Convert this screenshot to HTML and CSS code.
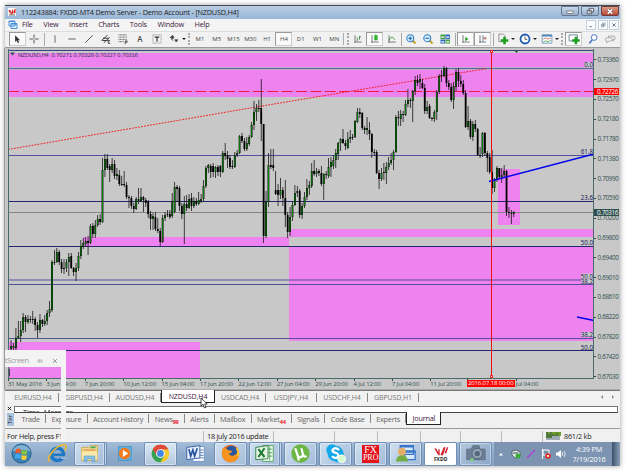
FILE: index.html
```html
<!DOCTYPE html>
<html lang="en">
<head>
    <meta charset="UTF-8">
    <title>112243884: FXDD-MT4 Demo Server</title>
    <link rel="stylesheet" href="styles.css">
</head>
<body>
    <div class="window">
        <div class="titlebar">
            <svg class="logo" viewBox="0 0 10 10"><rect width="10" height="10" fill="#fff"/><path d="M1 3l2 4V3zM4 7l2-5v5zM7 6l2-5v5z" fill="#d00" stroke="#c00" stroke-width=".6"/><path d="M1 8.7h8" stroke="#333"/></svg>
            <span class="title">112243884: FXDD-MT4 Demo Server - Demo Account - [NZDUSD,H4]</span>
            <div class="winbuttons">
                <span><svg viewBox="0 0 18 10"><rect x="5.500" y="4.500" width="7" height="2.500" fill="#fff" stroke="#555" stroke-width=".7"/></svg></span>
                <span><svg viewBox="0 0 18 10"><path d="M8 1.500h5v4H8zM6 3.500h5v4H6z" fill="#fff" stroke="#445" stroke-width=".9"/></svg></span>
                <span class="close"><svg viewBox="0 0 18 10"><path d="M6.500 2.500l5 5m0-5l-5 5" stroke="#555" stroke-width="2.600"/><path d="M6.500 2.500l5 5m0-5l-5 5" stroke="#fff" stroke-width="1.700"/></svg></span>
            </div>
        </div>

        <div class="menubar">
            <svg class="menuicon" viewBox="0 0 10 10"><path d="M1 1h6v5H1zM3 3.500h6v5H3z" fill="#dcefff" stroke="#3c86cf" stroke-width=".9"/><path d="M1 1.500h6M3 4h6" stroke="#3c86cf" stroke-width="1.200"/></svg>
            <span>File</span><span>View</span><span>Insert</span><span>Charts</span><span>Tools</span><span>Window</span><span>Help</span>
            <div class="childbuttons"><b><svg viewBox="0 0 10 10"><path d="M3 7h3" stroke="#456"/></svg></b><b><svg viewBox="0 0 10 10"><path d="M4.500 2.500h3v3h-3zM3 4.500h3v3H3z" fill="#fff" stroke="#567" stroke-width=".7"/></svg></b><b><svg viewBox="0 0 10 10"><path d="M3 3l4 4m0-4L3 7" stroke="#567" stroke-width="1.100"/></svg></b></div>
        </div>

        <div class="toolbar">
            <i class="pressed"><svg viewBox="0 0 16 16"><path d="M5.500 3v9l2-2 1.600 3.500 1.700-.8L9.300 9.500h2.900z" fill="#333"/></svg></i>
            <i><svg viewBox="0 0 16 16"><path d="M8 2v5M8 9v5M2 8h5M9 8h5" stroke="#555" stroke-width="1.300"/></svg></i>
            <i class="sep"></i>
            <i><svg viewBox="0 0 16 16"><path d="M8 3v10" stroke="#666" stroke-width="1.300"/></svg></i>
            <i><svg viewBox="0 0 16 16"><path d="M3 8h10" stroke="#666" stroke-width="1.300"/></svg></i>
            <i><svg viewBox="0 0 16 16"><path d="M3 13L13 3" stroke="#555" stroke-width="1.300"/></svg></i>
            <i><svg viewBox="0 0 16 16"><path d="M2 10l8-7M5 13l8-7M4 7h8M3 10h8" stroke="#333" stroke-width="1.200"/><path d="M11 10v4h2.500M11 12h2M11 10h2.500" fill="none" stroke="#333"/></svg></i>
            <i><svg viewBox="0 0 16 16"><path d="M2 2.500h11M2 5.500h11M2 8.500h11M2 11.500h7" stroke="#444" stroke-dasharray="1.500 .5"/><path d="M11 15v-4.500h2.500v2H11" fill="none" stroke="#333"/></svg></i>
            <i class="letter">A</i>
            <i><svg viewBox="0 0 16 16"><path d="M2.500 2.500h11v11h-11z" fill="none" stroke="#777" stroke-dasharray="1 .7"/><path d="M5 5.500h6M8 5.500v6" stroke="#333" stroke-width="1.500"/></svg></i>
            <i class="wide"><svg viewBox="0 0 16 16"><path d="M3 6l3-3 2 3-2 2zM9 9h4l-2 3zM4 8l3 2" fill="#444" stroke="#444"/></svg><em></em></i>
            <i class="handle"></i>
            <i class="tf">M1</i><i class="tf">M5</i><i class="tf">M15</i><i class="tf">M30</i><i class="tf">H1</i><i class="tf pressed">H4</i><i class="tf">D1</i><i class="tf">W1</i><i class="tf">MN</i>
            <i class="handle double"></i>
            <i><svg viewBox="0 0 16 16"><path d="M4 3v10M3 12h10" stroke="#555"/><path d="M7 6v5M10 4v5M10 5h2" stroke="#2a7a2a"/></svg></i>
            <i class="pressed"><svg viewBox="0 0 16 16"><path d="M4 3v10M3 12h10" stroke="#555"/><path d="M9 2v8" stroke="#173"/><rect x="7" y="3" width="4.500" height="6.500" fill="#2db52d"/></svg></i>
            <i><svg viewBox="0 0 16 16"><path d="M4 3v10M3 12h10" stroke="#555"/><path d="M4 10c2-6 5-5 8-1" fill="none" stroke="#2a9a2a" stroke-width="1.300"/></svg></i>
            <i class="sep thin"></i>
            <i><svg viewBox="0 0 16 16"><path d="M10 10l4 4" stroke="#c9a22a" stroke-width="2.800"/><circle cx="7" cy="7" r="4.600" fill="#d9f0ff" stroke="#2f7fc4" stroke-width="1.400"/><path d="M4.500 7h5M7 4.500v5" stroke="#1a5fa8" stroke-width="1.400"/></svg></i>
            <i><svg viewBox="0 0 16 16"><path d="M10 10l4 4" stroke="#c9a22a" stroke-width="2.800"/><circle cx="7" cy="7" r="4.600" fill="#d9f0ff" stroke="#2f7fc4" stroke-width="1.400"/><path d="M4.500 7h5" stroke="#1a5fa8" stroke-width="1.400"/></svg></i>
            <i><svg viewBox="0 0 16 16"><path d="M2 2h6v6H2zM8.500 8.500h6v5.500h-6z" fill="#3f9f3f"/><path d="M8.500 2h6v6h-6zM2 8.500h6V14H2z" fill="#2f66c0"/><path d="M3 5.500h4M9.500 5.500h4M3 11.800h4M9.500 11.800h4" stroke="#fff" stroke-width="1.700"/></svg></i>
            <i class="sep"></i>
            <i class="pressed"><svg viewBox="0 0 16 16"><path d="M4 3v10M3 12h10" stroke="#555"/><path d="M7 5l4 3-4 3z" fill="#2a9a2a"/></svg></i>
            <i class="pressed"><svg viewBox="0 0 16 16"><path d="M4 3v10M3 12h9M8 3v8" stroke="#456"/><path d="M9 7h4M11.500 5l-2 2 2 2" fill="none" stroke="#a43"/></svg></i>
            <i class="sep"></i>
            <i class="wide"><svg viewBox="0 0 16 16"><path d="M2.500 1.500h6l2 2v8h-8z" fill="#f4f4f4" stroke="#777"/><path d="M10 5v10M5 10h10" stroke="#1e9e1e" stroke-width="3.400"/></svg><em></em></i>
            <i class="wide"><svg viewBox="0 0 16 16"><circle cx="8" cy="8" r="6" fill="#fff" stroke="#1d5fae" stroke-width="2.400"/><path d="M8 4.500v4h3" fill="none" stroke="#333"/></svg><em></em></i>
            <i class="wide"><svg viewBox="0 0 16 16"><path d="M1.500 2.500h13v11h-13z" fill="#fff" stroke="#4d86b8"/><path d="M1.500 3.500h13" stroke="#4d86b8" stroke-width="2.400"/><path d="M3 8l3-1.500 3 1.500 4-1.500" fill="none" stroke="#c44"/><path d="M3 12l3-1.500 3 1 4-1.500" fill="none" stroke="#393"/></svg><em></em></i>
            <i class="handle"></i>
            <i class="pressed"><svg viewBox="0 0 16 16"><path d="M1.500 2.500h11v8h-11z" fill="#fff" stroke="#49697d"/><path d="M10.500 5v10M5.500 10h10" stroke="#1e9e1e" stroke-width="3.400"/></svg></i>
            <i class="search"><svg viewBox="0 0 16 16"><path d="M7 9l-4 5" stroke="#4a72c4" stroke-width="2"/><circle cx="9.500" cy="6" r="3.800" fill="#fff" stroke="#4a72c4" stroke-width="1.300"/></svg></i>
            <i><svg viewBox="0 0 16 16"><path d="M6 4h6q3 0 3 2.500T12 9l1 2-3-2H8Q5 9 6 4z" fill="#e6e6e6" stroke="#999"/><path d="M3 6.500h5q3 0 3 2t-3 2.500H6l-2.500 2 .5-2.300Q0 10 3 6.500z" fill="#f4f4f4" stroke="#999"/></svg></i>
        </div>

        <div class="chart">
            <div class="plotrow">
                <svg class="plot" id="plot" viewBox="8 49 586 330">
                    <g fill="#ee82ee">
                        <rect x="8" y="53" width="586" height="44"/>
                        <rect x="83" y="237" width="206" height="9"/>
                        <rect x="289" y="229" width="305" height="8"/>
                        <rect x="289" y="246" width="305" height="95"/>
                        <rect x="8" y="342" width="192" height="37"/>
                        <rect x="498" y="169" width="22" height="56"/>
                    </g>
                    <path d="M8 50.500h586" stroke="#3a3f88"/>
                    <path d="M8 68.500h586" stroke="#c2a8cd" stroke-width="3"/>
                    <path d="M8 68.500h586" stroke="#5b6c9c"/>
                    <path d="M8 155.500h586M8 280h586M8 284.500h586M8 338.500h586" stroke="#52529a" stroke-width="1.200"/>
                    <path d="M8 201.500h586M8 246.500h586M8 350.500h586" stroke="#27276f"/>
                    <path d="M8 212.500h586" stroke="#858585"/>
                    <path d="M8 91.500h586" stroke="#f01848" stroke-dasharray="11 3.400"/>
                    <path d="M8 149.500L262 106 487 68.500" stroke="#f02020" stroke-dasharray="1.800 1.200" fill="none"/>
                    <g id="candles"></g>
                    <path d="M489 181.500L594 154M577 317l17 3.500" stroke="#0000f0" stroke-width="1.300"/>
                    <path d="M491.500 52v323" stroke="#f01010"/>
                    <path d="M490.500 50.500h2v2h-2zM490.500 375.500h2v2h-2z" fill="#fff" stroke="#f01010"/>
                    <path d="M514 50h5l-2.500 3z" fill="#2f4f4f"/>
                    <path d="M10 52.500h5l-2.500 3z" fill="#2f4f4f"/>
                    <text x="18" y="56.700" class="quote" textLength="120">NZDUSD,H4&#160; 0.70271 0.70328 0.70227 0.70316</text>
                    <g class="fib" id="fib"></g>
                    <path d="M8.500 49v329.500H594M593.500 49v330" stroke="#4b6a6a" fill="none"/>
                </svg>
                <div class="prices" id="prices"></div>
            </div>
            <div class="times" id="times"></div>
        </div>

        <div class="charttabs">
            <span>EURUSD,H4</span><span>GBPUSD,H4</span><span>AUDUSD,H4</span><span class="active">NZDUSD,H4</span><span>USDCAD,H4</span><span>USDJPY,H4</span><span>USDCHF,H4</span><span>GBPUSD,H1</span>
            <div class="arrows"><u></u><u class="next"></u></div>
        </div>

        <div class="terminal">
            <div class="side"><svg viewBox="0 0 6 6"><path d="M1 1l4 4m0-4L1 5" stroke="#222" stroke-width="1.200"/></svg><div class="vert">Ter</div></div>
            <div class="termmain">
                <div class="loghead"><span>Time</span><span>Message</span></div>
                <div class="termtabs"><span>Trade</span><span>Exposure</span><span>Account History</span><span>News<sub>99</sub></span><span>Alerts</span><span>Mailbox</span><span>Market<sub>44</sub></span><span>Signals</span><span>Code Base</span><span>Experts</span><span class="active">Journal</span></div>
            </div>
        </div>

        <div class="status">
            <span class="help">For Help, press F1</span><span class="update">18 july 2016 update</span><span class="c1"></span><span class="c2"></span><span class="c3"></span><span class="c4"></span><span class="c5"></span>
            <span class="net"><svg viewBox="0 0 15 8"><path d="M0 1h15M0 3h15M0 5h6" stroke="#6f9a2c" stroke-width="2"/><path d="M1 0v8M3 2v6M5 0v8M7 2v6M9 3v5M11 1v7M13 4v4" stroke="#24455a" stroke-width=".8"/></svg>861/2 kb</span>
        </div>

        <div class="taskbar">
            <div class="app start"><svg viewBox="0 0 24 24"><circle cx="12" cy="12" r="10.500" fill="#27608f"/><circle cx="12" cy="12" r="9.500" fill="#3b83b4"/><path d="M2.500 10a10 10 0 0119 0q-9-4-19 0z" fill="#9cc6de" opacity=".7"/><path d="M6 8q3-2 5-.5V12q-2-1.500-5.500 0z" fill="#ee5a29"/><path d="M12 8q3 2 6 0l-.5 4.500q-3 1.500-5.500 0z" fill="#8cc63e"/><path d="M5.500 13q3-1.500 5.500 0v4.500q-3-1.500-6 0z" fill="#3fa9f5"/><path d="M12 13.500q3 1.500 5.500 0L17 18q-3 1.500-5 0z" fill="#ffd02e"/></svg></div>
            <div class="app ie"><svg viewBox="0 0 24 24"><circle cx="12" cy="13" r="7" fill="none" stroke="#1e78c8" stroke-width="4"/><path d="M7 13.500h11" stroke="#1e78c8" stroke-width="3"/><path d="M16 15.300h6v3h-6z" fill="#9ab5d3"/><path d="M3 21c-5-2 6-18 16-19 4 0 3 4 1 7" fill="none" stroke="#f0b928" stroke-width="1.800"/></svg></div>
            <div class="app open stack"><svg viewBox="0 0 24 24"><path d="M3 5h8l2-2h8v17H3z" fill="#f5df8d" stroke="#c9a64a"/><path d="M5 8h14" stroke="#d96a42"/><path d="M13 5h6" stroke="#43a862" stroke-width="2"/><path d="M3 10h18v9H3z" fill="#fae9ab"/><path d="M6 21v-6h12v6h-3v-3H9v3z" fill="#8cc6e8" stroke="#5aa2d2"/></svg></div>
            <div class="app"><svg viewBox="0 0 24 24"><path d="M7 4l13-2v19l-13-1z" fill="#8fc2e0"/><rect x="4" y="4" width="15" height="16" fill="#64addb" stroke="#4e94c4"/><circle cx="11" cy="12" r="6.500" fill="#f17a1c"/><path d="M9 8l6 4-6 4z" fill="#fff"/></svg></div>
            <div class="app open hot"><svg viewBox="0 0 24 24"><circle cx="12" cy="12" r="10" fill="#f7c92b"/><path d="M12 12L3.300 7A10 10 0 0120.700 7H12z" fill="#de4a3c"/><path d="M3.300 7A10 10 0 0012 22l4.300-7.500L12 12z" fill="#34a354"/><path d="M12 2A10 10 0 003.300 7l4.400 7.500L12 7h8.700A10 10 0 0012 2z" fill="#de4a3c"/><circle cx="12" cy="12" r="5" fill="#fff"/><circle cx="12" cy="12" r="3.900" fill="#4285e8"/></svg></div>
            <div class="app"><svg viewBox="0 0 24 24"><path d="M9 4h13v17H9z" fill="#fff" stroke="#6c91c4"/><path d="M15 8h6M15 11h6M15 14h6M13 17h8" stroke="#3f6dae"/><path d="M2 5l15-2v14L2 19z" fill="#e8effa" stroke="#2c5aa0"/><path d="M4.500 7l2 8 2.500-7 2 7 3-9" fill="none" stroke="#2554a0" stroke-width="1.900"/></svg></div>
            <div class="app open"><svg viewBox="0 0 24 24"><circle cx="12" cy="12" r="10" fill="#e8681c"/><circle cx="13" cy="10" r="7" fill="#29579e"/><path d="M3 6q4-1 6 2l5 1q-1 3-4 3 2 4 6 2 4-1 4-6 4 6 0 10-5 6-12 3Q0 17 3 6z" fill="#f79420"/><path d="M19 6q3 5 1 9" stroke="#fccb38" stroke-width="2" fill="none"/></svg></div>
            <div class="app open stack"><svg viewBox="0 0 24 24"><path d="M10 3h12v18H10z" fill="#f5fff5" stroke="#4c9b58"/><path d="M15 7h6M15 11h6M15 15h6M18 4v16" stroke="#4c9b58"/><path d="M2 5l14-2v15L2 19z" fill="#e5f5e4" stroke="#267a3c"/><path d="M5 7l7 9M12 6l-7 10" stroke="#1f7a36" stroke-width="2.400"/></svg></div>
            <div class="app open"><svg viewBox="0 0 24 24"><circle cx="12" cy="12" r="10.500" fill="#6db644"/><path d="M6 6l3 9q3 3 6-1l-2-8M15 13q1 4 4 2M9 15l1 5" stroke="#fff" stroke-width="2.500" fill="none"/></svg></div>
            <div class="app open"><svg viewBox="0 0 24 24"><circle cx="8" cy="8" r="6.500" fill="#14a8ea"/><circle cx="16" cy="16" r="6.500" fill="#14a8ea"/><circle cx="12" cy="12" r="9" fill="#14a8ea"/><path d="M16 8q-3-3-6-1.500-3 2 0 4l4 1.500q3 3-1 5-3 .5-5-2" stroke="#fff" stroke-width="2.600" fill="none"/><circle cx="19" cy="18" r="4.500" fill="#d9f7cd" stroke="#fff"/></svg></div>
            <div class="app open"><div class="fxpro">FX<small>PRO</small></div></div>
            <div class="app open"><svg viewBox="0 0 24 24"><path d="M6 3h15v10H6zM11 9h12v10H11z" fill="#d5e9ff" stroke="#3a76c6" stroke-width="1.500"/><path d="M6 4h15M11 10h12" stroke="#3a76c6" stroke-width="2"/><circle cx="8" cy="10" r="4.500" fill="#e6ad67"/><path d="M1 21q1-7 7-7t7 7z" fill="#73ad43"/></svg></div>
            <div class="app open white"><div class="fxdd"><svg viewBox="0 0 24 15"><path d="M2 3h3l3 6V4h2v9H8zM11 13l5-12h3l-4 12zM17 10l4-9h2l-3 9z" fill="#d3202a"/></svg>FXDD</div></div>
            <div class="app open dim"><svg viewBox="0 0 24 24"><path d="M2 7h5l2-4h7l1 4h6v12H2z" fill="#6d8095" stroke="#5b6c80"/><circle cx="14" cy="12" r="6" fill="#93a4b5" stroke="#4f6074"/><circle cx="14" cy="12" r="3" fill="#52667d"/><circle cx="8" cy="19" r="2" fill="#7fd07a"/></svg></div>
            <div class="tray">
                <svg viewBox="0 0 10 10"><path d="M3 6.500L5 4l2 2.500z" fill="#fff"/></svg>
                <svg viewBox="0 0 10 10"><path d="M1 2l4-1 4 2v4l-5 2-3-3z" fill="#dfe6e6" stroke="#455" stroke-width=".8"/><path d="M2 4h5" stroke="#455"/><circle cx="7" cy="7" r="2.500" fill="#38ad38"/></svg>
                <svg viewBox="0 0 10 10"><path d="M1 9l8-8" stroke="#a83fd6" stroke-width="1.400"/></svg>
                <svg viewBox="0 0 10 10"><path d="M1.500 0v10M2 1h6v5H2z" fill="none" stroke="#fff"/><circle cx="7" cy="7" r="2.800" fill="#dd2f26"/><path d="M6 6l2 2m0-2L6 8" stroke="#fff" stroke-width=".8"/></svg>
                <svg viewBox="0 0 10 10"><path d="M0 3.500h2L5 1v8L2 6.500H0z" fill="#fff"/><path d="M6 3q1.500 2 0 4M8 2q2.500 3 0 6" fill="none" stroke="#fff" stroke-width=".8"/></svg>
            </div>
            <div class="clock">4:39 PM<br>7/19/2016</div>
            <div class="peek"></div>
        </div>

        <div class="ghost"><div class="ghosthead"><span>tScreen</span><svg viewBox="0 0 22 8"><path d="M1 4h2M3 2v4M3 3h3v2H3" fill="none" stroke="#aaa" stroke-width=".8"/><path d="M17 2l4 4m0-4l-4 4" stroke="#999"/></svg></div></div>
        <svg class="cursor" viewBox="0 0 8 12"><path d="M1 1v8l2-1.700L4.500 11l1.500-.7L4.700 7h2.500z" fill="#fff" stroke="#222" stroke-width=".8"/></svg>
    </div>
    <script src="chart.js"></script>
</body>
</html>
```
FILE: styles.css
```css
/* General */
body {
    margin: 0;
    background: #fff;
    font-family: "Open Sans", "Noto Sans", sans-serif;
    font-size: 7.3px;
    line-height: 1;
    color: #222;
    overflow: hidden;
}

.window {
    position: relative;
    box-sizing: border-box;
    width: 615px;
    height: 461px;
    margin: 5px;
    background: #f0f0f0;
    display: flex;
    flex-direction: column;
    box-shadow: 0 0 5px rgba(0, 0, 0, 0.4);
}

svg {
    display: block;
}

/* Title and menu */
.titlebar {
    box-sizing: border-box;
    height: 14px;
    border-top: 1px solid #444b55;
    background: linear-gradient(#b9cde3, #98b7d8);
    display: flex;
    align-items: center;
    padding-left: 3px;
}

.logo {
    width: 8px;
    height: 8px;
    margin-right: 5px;
}

.title {
    flex: 1;
    font-size: 7.25px;
    letter-spacing: -0.2px;
    white-space: nowrap;
}

.winbuttons {
    display: flex;
    align-self: flex-start;
    gap: 2px;
    margin-right: 1px;
}

.winbuttons span {
    box-sizing: border-box;
    width: 18px;
    height: 10px;
    border: 1px solid #65788f;
    border-radius: 0 0 2px 2px;
    background: linear-gradient(#c8d8e9, #98b0cb);
}

.winbuttons svg {
    width: 16px;
    height: 9px;
}

.winbuttons .close {
    background: linear-gradient(#dc9a88, #b94832);
    border-color: #6d3a3a;
}

.menubar {
    height: 12px;
    display: flex;
    align-items: center;
    background: #f4f4f4;
    color: #40203a;
}

.menuicon {
    width: 10px;
    height: 10px;
    margin: 0 4px 0 3px;
}

.menubar span {
    margin-right: 10.6px;
    letter-spacing: -0.2px;
}

.childbuttons {
    margin-left: auto;
    display: flex;
    gap: 1.5px;
    padding-right: 1px;
}

.childbuttons b {
    box-sizing: border-box;
    width: 10px;
    height: 10px;
    border: 1px solid #bfd0df;
    background: #fafcff;
}

/* Toolbar */
.toolbar {
    box-sizing: border-box;
    height: 17px;
    padding-left: 3.5px;
    display: flex;
    align-items: center;
    background: #f1f1f1;
    border-bottom: 1px solid #999;
    border-top: 1px solid #ddd;
}

.toolbar i {
    flex: none;
    box-sizing: border-box;
    width: 17px;
    height: 14px;
    display: flex;
    align-items: center;
    justify-content: center;
    font-style: normal;
    color: #444;
}

.toolbar svg {
    flex: none;
    width: 12px;
    height: 12px;
}

.toolbar .tf {
    width: 16.8px;
    font-size: 6px;
}

.toolbar .pressed {
    background: #fafafa;
    border: 1px solid #ccc;
    border-top-color: #999;
    border-left-color: #999;
}

.toolbar .letter {
    font-size: 8px;
    font-weight: 600;
}

.toolbar .wide {
    width: 22px;
    gap: 2px;
}

.toolbar em {
    border: 2px solid transparent;
    border-top-color: #222;
    border-bottom: 0;
}

.toolbar .sep {
    width: 4px;
}

.toolbar .sep::before {
    content: "";
    width: 1px;
    height: 13px;
    background: #aaa;
}

.toolbar .thin {
    width: 2px;
}

.toolbar .handle {
    width: 4px;
    height: 12px;
    border-left: 2px dotted #aaa;
}

.toolbar .double {
    width: 6.5px;
    border-left: 1px solid #aaa;
    border-right: 2px dotted #aaa;
}

.toolbar .search {
    margin-left: 2px;
}

.toolbar .search + i {
    margin-left: 0.5px;
}

/* Chart */
.chart {
    height: 343px;
    box-sizing: border-box;
    padding: 1px 0 0 3px;
    background: #c8c8c8;
    border-left: 1px solid #999;
    border-bottom: 1px solid #aaa;
    margin-left: -1px;
}

/* price labels run a little below the plot */
.plotrow {
    display: flex;
    height: 330px;
}

.plot {
    width: 586px;
    height: 330px;
    flex: none;
}

.quote {
    font: 5.6px "DejaVu Sans", sans-serif;
    fill: #3e3e62;
}

.fib {
    font: 6.2px "Noto Sans", sans-serif;
    fill: #23235c;
    text-anchor: end;
}

.prices {
    width: 26px;
    padding-top: 1.2px;
    box-sizing: border-box;
}

.prices span {
    display: flex;
    align-items: center;
    height: 19.8px;
    font-size: 6.3px;
    letter-spacing: -0.3px;
    color: #2f4f4f;
    position: relative;
}

.prices span::before {
    content: "";
    width: 2px;
    height: 1px;
    background: #2f4f4f;
    margin-right: 1.5px;
}

.prices b {
    position: absolute;
    z-index: 1;
    left: 0;
    width: 25px;
    height: 7px;
    line-height: 7px;
    text-indent: 3px;
    font-size: 6.3px;
    font-weight: normal;
    color: #fff;
}

.prices .ask {
    top: 18px;
    background: #f00;
}

.prices .bid {
    top: 20px;
    background: #2f4f4f;
}

.times {
    display: flex;
    height: 10px;
    align-items: center;
    font-size: 6px;
    letter-spacing: -0.12px;
    color: #2f4f4f;
    white-space: nowrap;
}

.times span {
    width: 38.4px;
    flex: none;
    position: relative;
}

.times span::before {
    content: "";
    position: absolute;
    left: 0;
    top: -2px;
    width: 1px;
    height: 2px;
    background: #2f4f4f;
}

.times .mark {
    width: 48px;
    height: 7px;
    line-height: 7px;
    text-align: center;
    margin-left: -2px;
    margin-right: 1px;
    background: #f00;
    color: #fff;
}

/* Chart tabs */
.charttabs {
    box-sizing: border-box;
    height: 14px;
    padding: 2px 0 0 3px;
    border-top: 1px solid #777;
    display: flex;
    color: #777;
    background: #f2f2f2;
    font-size: 7px;
    letter-spacing: -0.08px;
}

.charttabs span {
    box-sizing: border-box;
    width: 51px;
    height: 9px;
    line-height: 9px;
    text-align: center;
    border-right: 1px solid #888;
}

.charttabs .active {
    width: 54px;
    height: 13px;
    margin-top: -3px;
    line-height: 14px;
    background: #fff;
    color: #40203a;
    border: 1px solid #222;
    border-top: 0;
}

.arrows {
    margin-left: auto;
    display: flex;
    gap: 9px;
    padding: 2px 6px 0 0;
}

.arrows u {
    border: 2px solid transparent;
    border-right-color: #888;
    border-left: 0;
    height: 0;
}

.arrows .next {
    border-left: 2px solid #888;
    border-right: 0;
}

/* Terminal */
.terminal {
    height: 24px;
    display: flex;
}

.side {
    width: 9px;
    padding-left: 2px;
    box-sizing: border-box;
}

.side svg {
    width: 5px;
    height: 5px;
    margin: 2px 0;
}

.vert {
    writing-mode: vertical-rl;
    transform: rotate(180deg);
    width: 7px;
    height: 13px;
    font-size: 6px;
    line-height: 7px;
    background: #a9c3df;
    text-align: center;
}

.termmain {
    flex: 1;
    padding-top: 2px;
}

.loghead {
    box-sizing: border-box;
    height: 7px;
    margin-right: 2px;
    padding: 2px 8px 0;
    display: flex;
    gap: 4px;
    overflow: hidden;
    background: #fff;
    border: 1px solid #777;
    border-bottom-color: #444;
}

.termtabs {
    display: flex;
    padding-left: 2px;
    height: 14px;
    letter-spacing: -0.23px;
    color: #666;
}

.termtabs span {
    height: 9px;
    margin-top: 1px;
    line-height: 10px;
    padding: 0 5.2px 0 5.4px;
    border-right: 1px solid #888;
    white-space: nowrap;
}

.termtabs sub {
    font-size: 5.6px;
    line-height: 0;
    font-weight: bold;
    color: #e8202a;
}

.termtabs .active {
    background: #fff;
    color: #40203a;
    margin-top: -1px;
    height: 12px;
    line-height: 13px;
    border: 1px solid #222;
    border-top: 0;
}

/* Status bar */
.status {
    box-sizing: border-box;
    height: 14px;
    border-top: 1px solid #999;
    display: flex;
    align-items: center;
    padding-top: 1px;
    letter-spacing: -0.28px;
}

.status span {
    box-sizing: border-box;
    height: 11px;
    line-height: 11px;
    border-right: 1px solid #bbb;
    white-space: nowrap;
}

.status .help {
    width: 199px;
    padding-left: 2px;
}

.status .update {
    width: 70px;
    padding-left: 3px;
}

.status .c1 {
    width: 61px;
}

.status .c2,
.status .c3 {
    width: 43px;
}

.status .c4 {
    width: 40px;
}

.status .c5 {
    width: 41px;
    margin-right: 40px;
}

.status .net {
    display: flex;
    align-items: center;
    gap: 3px;
    padding-left: 3px;
    border: 0;
    border-left: 1px solid #bbb;
}

.net svg {
    width: 15px;
    height: 8px;
}

/* Taskbar */
.taskbar {
    height: 24px;
    display: flex;
    background: linear-gradient(#a4bdd9, #8fabca 50%, #86a3c5);
}

.app {
    flex: none;
    box-sizing: border-box;
    width: 33.2px;
    margin-right: 1.8px;
    height: 24px;
    display: flex;
    align-items: center;
    justify-content: center;
    border: 1px solid transparent;
}

.app svg {
    width: 21px;
    height: 21px;
}

.start {
    width: 32px;
    margin-right: 4px;
}

.start svg {
    width: 23px;
    height: 23px;
}

.ie {
    margin-right: 0;
}

.open {
    border-color: #6f8fb4;
    border-radius: 2px;
    background: linear-gradient(135deg, #cfdff0, #a3bcd9);
    box-shadow: inset 0 0 0 1px rgba(255, 255, 255, 0.4);
}

.stack {
    border-right: 3px double #6f8fb4;
}

.hot {
    background: linear-gradient(#d9e8f5, #b3c7dd);
}

.white {
    background: #fff;
}

.dim {
    background: linear-gradient(135deg, #b3c8de, #8ba6c6);
}

.fxpro {
    width: 17px;
    height: 18px;
    background: #e3121b;
    color: #fff;
    font: 10px/9px "Liberation Serif", serif;
    text-align: center;
}

.fxpro small {
    display: block;
    font-size: 8px;
    line-height: 7px;
}

.fxdd {
    font-size: 5px;
    font-weight: bold;
    text-align: center;
}

.fxdd svg {
    width: 16px;
    height: 11px;
}

.tray {
    flex: none;
    width: 70px;
    padding-left: 2px;
    display: flex;
    align-items: center;
    justify-content: space-between;
    background: #7c94b1;
}

.tray svg {
    width: 10px;
    height: 10px;
}

.clock {
    flex: 1;
    background: #7c94b1;
    color: #fff;
    text-align: center;
    line-height: 10px;
    padding-top: 2px;
    letter-spacing: -0.15px;
}

.peek {
    width: 7px;
    background: linear-gradient(90deg, #455a74, #8aa0b8);
    border-left: 1px solid #3f536c;
}

/* Half faded screenshot panel over the lower left corner */
.ghost {
    position: absolute;
    left: 0;
    top: 345px;
    width: 56px;
    height: 92px;
    border-right: 5px solid #f3f3f3;
}

.ghosthead {
    box-sizing: border-box;
    width: 57px;
    height: 17px;
    background: #f3f3f3;
    display: flex;
    align-items: center;
    padding-top: 4px;
    gap: 7px;
    color: #999;
    letter-spacing: -0.3px;
}

.ghosthead svg {
    width: 22px;
    height: 8px;
}

.cursor {
    position: absolute;
    left: 195px;
    top: 392px;
    width: 8px;
    height: 12px;
}
```
FILE: chart.js
```js
const SVG = 'http://www.w3.org/2000/svg';

// open, close, high, low (plot units, y grows downwards)
const candles = `376 369 367 379;349 346 340 358;348 346 343 351;348 338 328 350;338 336 321 339;336 330 321 342;330 317 313 333;317 322 315 332;322 319 315 324;319 320 316 323
320 319 311 324;319 325 317 331;325 330 322 338;330 320 314 333;320 324 319 327;324 321 315 326;321 313 310 325;313 309 301 317;310 262 260 312;262 263 250 265
262 252 248 263;252 262 250 265;262 269 259 273;269 268 259 274;268 262 259 272;262 257 253 276;256 268 253 269;268 272 267 276;272 268 263 281;268 256 252 271
256 246 240 259;247 243 238 249;244 241 237 246;241 243 236 255;243 226 224 244;226 234 223 238;234 225 220 238;225 219 215 227;219 222 214 225;222 170 158 223
170 159 154 177;159 168 154 170;166 170 164 182;170 164 158 173;164 176 160 179;176 174 168 180;175 184 170 186;184 185 176 186;185 184 171 187;185 197 182 199
197 197 195 208;198 206 196 209;206 209 203 213;209 199 197 210;199 201 188 204;201 197 188 202;197 200 196 212;200 203 198 207;202 214 200 218;214 219 211 230
219 216 213 230;217 229 212 231;229 231 218 233;231 242 228 246;242 218 215 243;218 215 212 221;215 214 210 217;214 217 210 219;216 201 193 218;212 187 182 213
187 189 185 202;188 206 186 211;206 214 203 219;214 204 196 244;204 208 195 211;208 199 194 209;198 206 193 211;206 201 197 208;201 204 198 206;204 200 192 205
201 199 194 203;199 186 180 202;186 168 166 188;168 165 164 173;166 172 164 178;166 172 163 177;172 167 166 178;167 172 165 176;166 172 165 177;172 153 151 173
153 156 143 160;155 159 151 168;158 167 155 169;167 166 160 169;167 155 152 168;155 153 150 157;153 136 135 154;136 141 133 143;141 149 138 151;149 143 137 151
144 137 135 146;137 125 122 138;125 112 101 130;112 108 104 121;108 108 100 112;108 124 79 141;124 236 124 243;236 202 191 238;202 165 153 207;165 167 149 169
165 168 149 171;190 194 171 195;190 195 184 206;195 190 178 199;190 198 187 206;198 215 180 227;215 232 212 238;232 217 207 236;217 205 201 221;205 193 185 206
193 191 186 197;191 215 189 218;215 206 203 219;206 197 192 208;197 188 179 200;188 185 181 195;186 171 163 188;171 174 160 176;174 171 168 177;171 173 169 176
173 184 166 186;184 174 173 200;174 175 171 179;176 167 158 178;167 162 157 177;166 160 155 169;160 153 149 168;154 143 142 160;143 139 138 151;139 143 129 144
143 146 140 150;148 139 132 149;139 137 130 143;137 137 134 140;137 121 120 138;122 112 108 123;112 114 108 118;113 128 112 130;128 130 126 134;130 128 117 135
130 134 122 140;134 152 133 158;153 152 149 156;152 173 150 174;173 179 170 189;179 173 168 181;173 172 163 180;173 167 162 184;167 163 157 170;163 160 153 165
160 152 150 170;152 117 115 153;117 118 111 126;119 114 110 126;114 115 111 122;115 104 100 116;104 100 89 107;100 101 98 108;101 91 90 122;91 80 76 95
80 83 75 86;82 79 74 89;83 88 79 89;88 111 84 114;111 107 101 114;106 118 104 119;118 119 117 121;119 112 110 122;112 92 90 120;92 76 74 94
76 75 70 82;76 68 66 77;68 83 67 87;83 87 80 90;87 100 83 102;100 86 82 109;87 72 69 91;72 81 68 87;81 84 75 87;84 93 80 95
93 127 90 128;127 121 106 130;121 137 119 139;137 124 121 141;124 129 120 132;129 155 128 156;155 155 147 158;154 133 132 157;133 153 132 156;153 158 151 172
157 172 153 174;172 188 150 194;188 179 178 192;179 168 166 182;168 177 168 179;178 175 168 183;175 171 165 178;171 212 170 216;212 213 207 218;213 214 210 224
214 212 211 217`.split(/[;\n]/).map(row => row.split(' ').map(Number));

function add(parent, name, attrs, text) {
    const el = document.createElementNS(SVG, name);
    for (const key in attrs) el.setAttribute(key, attrs[key]);
    if (text) el.textContent = text;
    parent.appendChild(el);
}

const group = document.getElementById('candles');
candles.forEach(([open, close, high, low], i) => {
    const x = 8.7 + i * 2.405;
    const top = Math.min(open, close);
    const height = Math.max(1, Math.abs(open - close));
    add(group, 'rect', {x: x - 0.4, y: high, width: 0.8, height: low - high, fill: '#1a1a1a'});
    add(group, 'rect', {x: x - 0.9, y: top, width: 1.8, height: height, fill: '#000'});
    if (close < open - 1) {
        add(group, 'rect', {x: x - 0.45, y: top + 0.4, width: 0.9, height: height - 0.8, fill: '#0a8a0a'});
    }
});

const levels = [[67, '0.0'], [154, '61.8'], [200, '23.6'], [245, '50.0'], [278.5, '50.0'], [283.5, '38.2'], [337, '38.2'], [349.5, '50.0']];
const fib = document.getElementById('fib');
levels.forEach(([y, label]) => {
    add(fib, 'rect', {x: 593 - label.length * 2.9, y: y - 5, width: label.length * 2.9, height: 5, fill: '#c8c8c8'});
    add(fib, 'text', {x: 593, y: y}, label);
});

const prices = ['0.73360', '0.72970', '0.72570', '0.72180', '0.71780', '0.71380', '0.70990', '0.70590', '0.70200',
    '0.69800', '0.69400', '0.69010', '0.68610', '0.68220', '0.67820', '0.67420', '0.67030'];
document.getElementById('prices').innerHTML = prices.map(p => {
    let tag = '';
    if (p === '0.72970') tag = '<b class="ask">0.72726</b>';
    if (p === '0.70590') tag = '<b class="bid">0.70316</b>';
    return `<span>${p}${tag}</span>`;
}).join('');

const times = ['31 May 2016', '3 Jun 04:00', '7 Jun 20:00', '10 Jun 12:00', '15 Jun 04:00', '17 Jun 20:00',
    '22 Jun 12:00', '27 Jun 04:00', '29 Jun 20:00', '4 Jul 12:00', '7 Jul 04:00', '11 Jul 20:00'];
document.getElementById('times').innerHTML = times.map(t => `<span>${t}</span>`).join('') +
    '<span class="mark">2016.07.18 00:00</span><span>Jul 04:00</span>';
```
